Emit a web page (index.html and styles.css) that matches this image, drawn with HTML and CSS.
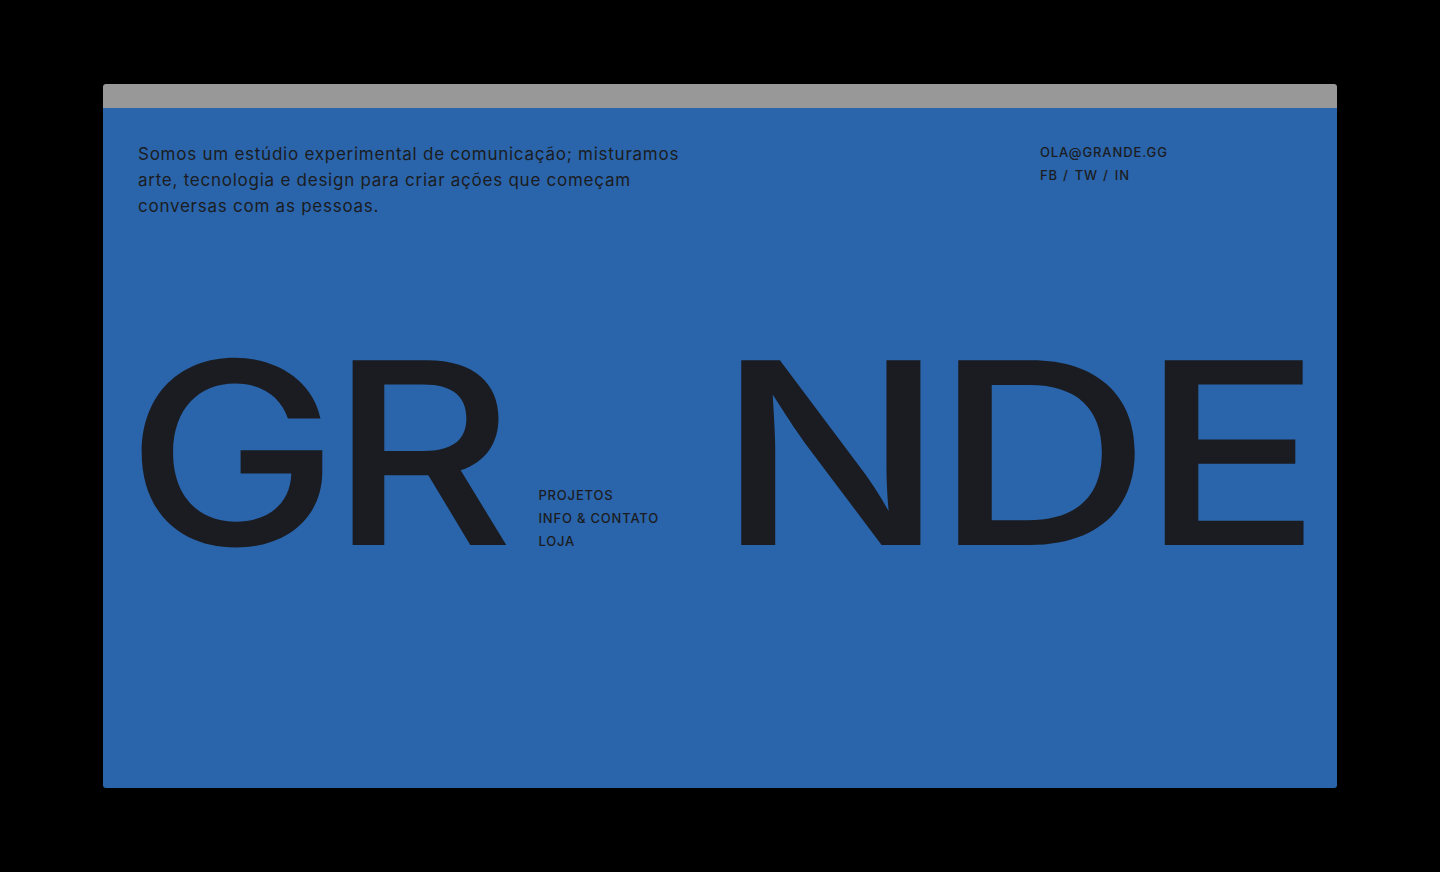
FILE: index.html
```html
<!DOCTYPE html>
<html lang="pt">
<head>
<meta charset="utf-8">
<title>Grande</title>
<link rel="stylesheet" href="styles.css">
</head>
<body>
<div class="window">
  <div class="titlebar"></div>
  <main class="page">
    <header class="header">
      <p class="intro">Somos um estúdio experimental de comunicação; misturamos<br>arte, tecnologia e design para criar ações que começam<br>conversas com as pessoas.</p>
      <div class="contact">
        <a class="link" href="#">OLA@GRANDE.GG</a>
        <div class="social"><a class="link" href="#">FB</a><span class="sep">/</span><a class="link" href="#">TW</a><span class="sep">/</span><a class="link" href="#">IN</a></div>
      </div>
    </header>
    <section class="hero">
      <span class="big big-left">GR</span>
      <nav class="menu">
        <a class="link" href="#">PROJETOS</a>
        <a class="link" href="#">INFO &amp; CONTATO</a>
        <a class="link" href="#">LOJA</a>
      </nav>
      <span class="big big-right">NDE</span>
    </section>
  </main>
</div>
</body>
</html>
```

FILE: styles.css
```css
* { box-sizing: border-box; }
html, body { margin: 0; padding: 0; }
body {
  background: #000;
  width: 1440px;
  height: 872px;
  overflow: hidden;
  padding: 84px 0 0 103px;
  font-family: Inter, "Liberation Sans", sans-serif;
  color: #1b1c21;
}
.window {
  width: 1234px;
  height: 704px;
  border-radius: 3px;
  overflow: hidden;
  display: flex;
  flex-direction: column;
}
.titlebar {
  height: 24px;
  background: #989898;
  flex: none;
}
.page {
  flex: 1;
  background: #2a64aa;
  padding: 33px 0 0 35px;
}
.header {
  display: flex;
  align-items: flex-start;
}
.intro {
  margin: 0;
  font-size: 17px;
  line-height: 26px;
  letter-spacing: 0.75px;
  width: 902px;
}
.contact {
  font-size: 13px;
  line-height: 23px;
  letter-spacing: 0.9px;
  font-weight: 500;
  display: flex;
  flex-direction: column;
}
.sep { margin: 0 6px 0 5px; }
.link { color: inherit; text-decoration: none; }
.hero {
  display: flex;
  align-items: flex-end;
  margin-top: 141px;
}
.big {
  display: inline-block;
  font-size: 254px;
  line-height: 185px;
  font-weight: 500;
  transform-origin: left bottom;
}
.big-left {
  margin-left: -12px;
  letter-spacing: -8px;
  transform: scaleX(1.12);
}
.big-right {
  letter-spacing: -9px;
  transform: scaleX(1.185);
}
.menu {
  display: flex;
  flex-direction: column;
  font-size: 13px;
  line-height: 23px;
  letter-spacing: 0.8px;
  font-weight: 500;
  margin: 0 0 -8px 74px;
  width: 179px;
}
```
